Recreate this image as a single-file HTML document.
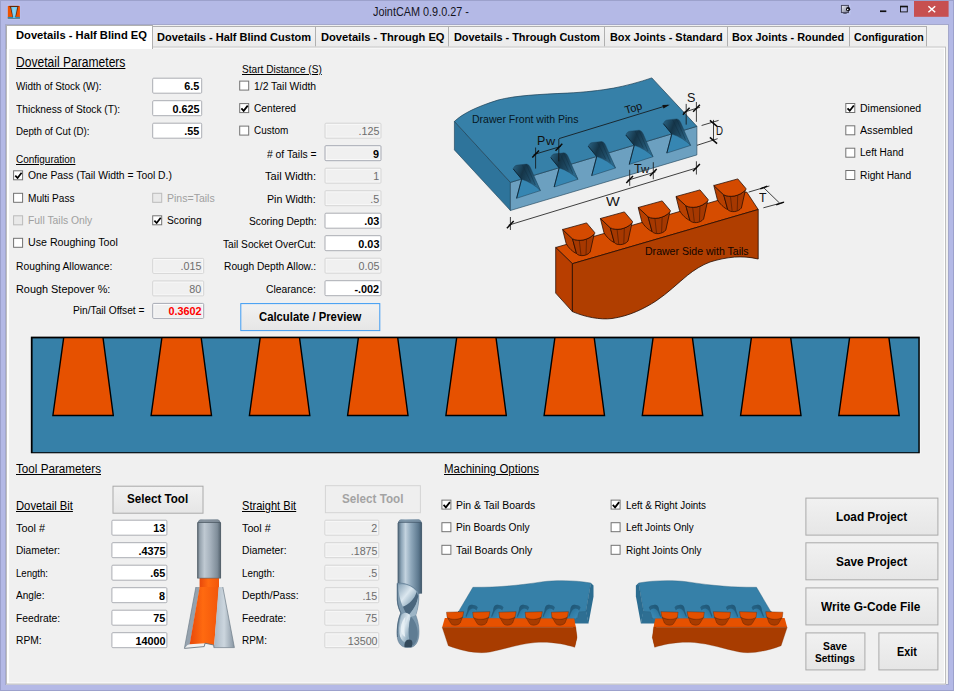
<!DOCTYPE html>
<html><head><meta charset="utf-8"><title>JointCAM 0.9.0.27 -</title>
<style>
html,body{margin:0;padding:0;}
body{width:954px;height:691px;overflow:hidden;background:#b4b9e6;font-family:"Liberation Sans",sans-serif;position:relative;}
#win{position:absolute;left:0;top:0;width:954px;height:691px;background:#b4b9e6;box-shadow:inset 0 0 0 1px #9ca1cc;}
#client{position:absolute;left:6px;top:25px;width:942px;height:659px;background:#f0f0f0;box-shadow:0 0 0 1px #a4a8cb;}
#pane{position:absolute;left:0;top:0;transform:translate(6px,46.5px);width:940.4px;height:637.7px;background:#fff;border:1px solid #bebebe;box-sizing:border-box;}
#page{position:absolute;left:0;top:0;transform:translate(8.9px,48.5px);width:935.2px;height:633.7px;background:#f0f0f0;}
.tab{position:absolute;top:26px;height:21px;box-sizing:border-box;border:1px solid #b0b0b0;border-bottom:none;background:linear-gradient(#f3f3f3,#ebebeb);}
.tab.act{top:25px;height:24px;background:#fff;border-color:#b0b0b0;z-index:2;}
.t{position:absolute;z-index:5;white-space:nowrap;transform-origin:0 50%;color:#000;display:block;}
.tb{position:absolute;left:0;top:0;height:16.2px;box-sizing:border-box;border:1px solid #abadb3;border-radius:1.5px;background:#fff;}
.tb.dis{border-color:#d6d6d6;background:#f0f0f0;box-shadow:inset 0 0 0 1px #f9f9f9;}
.tb.ro{border-color:#a7aab4;background:#f0f0f0;box-shadow:inset 0 0 0 1px #fcfcfc;}
.tb.red{border-color:#a7aab4;background:#f0f0f0;box-shadow:inset 0 0 0 1px #fcfcfc;}
.btn{position:absolute;left:0;top:0;box-sizing:border-box;border:1px solid #a9a9a9;background:linear-gradient(#f1f1f1,#e6e6e6);}
.btn.def{border-color:#3c9bf3;}
.btn.d{border-color:#d4d4d4;background:#efefef;}
.cb{position:absolute;left:0;top:0;width:10.4px;height:10.4px;box-sizing:border-box;border:1px solid #707070;background:#fff;}
.cb.cd{border-color:#bcbcbc;background:#e9e9e9;}
.cb svg{position:absolute;left:-1px;top:-1px;width:10.4px;height:10.4px;}
#gfx{position:absolute;left:0;top:0;width:954px;height:691px;pointer-events:none;}
</style></head>
<body>
<div id="win">
<div id="client"></div>
<div class="tab act" style="left:6px;width:147px"></div>
<div class="tab" style="left:152px;width:163.5px"></div>
<div class="tab" style="left:314.5px;width:134.0px"></div>
<div class="tab" style="left:447.5px;width:157.0px"></div>
<div class="tab" style="left:603.5px;width:124.0px"></div>
<div class="tab" style="left:726.5px;width:123.0px"></div>
<div class="tab" style="left:848.5px;width:78.5px"></div>
<div id="pane"></div>
<div id="page"></div>
<div class="tab act" style="left:0;top:0;transform:translate(7px,45.5px);width:145px;border:none;height:3px;background:#fff;z-index:3"></div>
<div class="tb en" style="transform:translate(152.2px,77.7px);width:49.6px"></div>
<div class="tb en" style="transform:translate(152.2px,100.2px);width:49.6px"></div>
<div class="tb en" style="transform:translate(152.2px,122.7px);width:49.6px"></div>
<div class="tb dis" style="transform:translate(152.2px,257.9px);width:51.6px"></div>
<div class="tb dis" style="transform:translate(152.2px,280.4px);width:51.6px"></div>
<div class="tb red" style="transform:translate(152.2px,302.9px);width:51.6px"></div>
<div class="tb dis" style="transform:translate(324.5px,122.7px);width:57.1px"></div>
<div class="tb ro" style="transform:translate(324.5px,145.2px);width:57.1px"></div>
<div class="tb dis" style="transform:translate(324.5px,167.7px);width:57.1px"></div>
<div class="tb dis" style="transform:translate(324.5px,190.2px);width:57.1px"></div>
<div class="tb en" style="transform:translate(324.5px,212.7px);width:57.1px"></div>
<div class="tb en" style="transform:translate(324.5px,235.2px);width:57.1px"></div>
<div class="tb dis" style="transform:translate(324.5px,257.7px);width:57.1px"></div>
<div class="tb en" style="transform:translate(324.5px,280.2px);width:57.1px"></div>
<div class="tb en" style="transform:translate(111.4px,519.7px);width:56.4px"></div>
<div class="tb en" style="transform:translate(111.4px,542.2px);width:56.4px"></div>
<div class="tb en" style="transform:translate(111.4px,564.7px);width:56.4px"></div>
<div class="tb en" style="transform:translate(111.4px,587.2px);width:56.4px"></div>
<div class="tb en" style="transform:translate(111.4px,609.7px);width:56.4px"></div>
<div class="tb en" style="transform:translate(111.4px,632.2px);width:56.4px"></div>
<div class="tb dis" style="transform:translate(324.3px,519.7px);width:55.4px"></div>
<div class="tb dis" style="transform:translate(324.3px,542.2px);width:55.4px"></div>
<div class="tb dis" style="transform:translate(324.3px,564.7px);width:55.4px"></div>
<div class="tb dis" style="transform:translate(324.3px,587.2px);width:55.4px"></div>
<div class="tb dis" style="transform:translate(324.3px,609.7px);width:55.4px"></div>
<div class="tb dis" style="transform:translate(324.3px,632.2px);width:55.4px"></div>
<div class="btn def" style="transform:translate(240.3px,303.1px);width:140.3px;height:27.7px"></div>
<div class="btn n" style="transform:translate(112.5px,485.7px);width:90.5px;height:27.7px"></div>
<div class="btn d" style="transform:translate(324.9px,485.2px);width:95.6px;height:28.0px"></div>
<div class="btn n" style="transform:translate(805.4px,497.6px);width:132.6px;height:38.0px"></div>
<div class="btn n" style="transform:translate(805.4px,542.3px);width:132.6px;height:38.4px"></div>
<div class="btn n" style="transform:translate(805.4px,587.4px);width:132.6px;height:38.4px"></div>
<div class="btn n" style="transform:translate(805.4px,632.4px);width:59.7px;height:38.2px"></div>
<div class="btn n" style="transform:translate(878.4px,632.4px);width:59.6px;height:38.2px"></div>
<div class="cb" style="transform:translate(13.1px,170.3px)"><svg viewBox="0 0 10 10"><path d="M2.1 5.1 L4.3 7.4 L8.2 2.4" fill="none" stroke="#000" stroke-width="1.7"/></svg></div>
<div class="cb" style="transform:translate(13.1px,192.8px)"></div>
<div class="cb cd" style="transform:translate(13.1px,215.3px)"></div>
<div class="cb" style="transform:translate(13.1px,237.8px)"></div>
<div class="cb cd" style="transform:translate(152.2px,192.8px)"></div>
<div class="cb" style="transform:translate(152.2px,215.3px)"><svg viewBox="0 0 10 10"><path d="M2.1 5.1 L4.3 7.4 L8.2 2.4" fill="none" stroke="#000" stroke-width="1.7"/></svg></div>
<div class="cb" style="transform:translate(239.2px,80.6px)"></div>
<div class="cb" style="transform:translate(239.2px,103.1px)"><svg viewBox="0 0 10 10"><path d="M2.1 5.1 L4.3 7.4 L8.2 2.4" fill="none" stroke="#000" stroke-width="1.7"/></svg></div>
<div class="cb" style="transform:translate(239.2px,125.6px)"></div>
<div class="cb" style="transform:translate(845.3px,103.0px)"><svg viewBox="0 0 10 10"><path d="M2.1 5.1 L4.3 7.4 L8.2 2.4" fill="none" stroke="#000" stroke-width="1.7"/></svg></div>
<div class="cb" style="transform:translate(845.3px,125.3px)"></div>
<div class="cb" style="transform:translate(845.3px,147.7px)"></div>
<div class="cb" style="transform:translate(845.3px,170.0px)"></div>
<div class="cb" style="transform:translate(441.4px,499.6px)"><svg viewBox="0 0 10 10"><path d="M2.1 5.1 L4.3 7.4 L8.2 2.4" fill="none" stroke="#000" stroke-width="1.7"/></svg></div>
<div class="cb" style="transform:translate(441.4px,522.2px)"></div>
<div class="cb" style="transform:translate(441.4px,544.8px)"></div>
<div class="cb" style="transform:translate(610.6px,499.6px)"><svg viewBox="0 0 10 10"><path d="M2.1 5.1 L4.3 7.4 L8.2 2.4" fill="none" stroke="#000" stroke-width="1.7"/></svg></div>
<div class="cb" style="transform:translate(610.6px,522.2px)"></div>
<div class="cb" style="transform:translate(610.6px,544.8px)"></div>
<svg id="gfx" viewBox="0 0 954 691">
<defs>
<linearGradient id="shank" x1="0" x2="1" y1="0" y2="0"><stop offset="0" stop-color="#56646f"/><stop offset="0.1" stop-color="#94a1ac"/><stop offset="0.3" stop-color="#bfc9d2"/><stop offset="0.55" stop-color="#a6b2bd"/><stop offset="0.85" stop-color="#7f8d99"/><stop offset="1" stop-color="#515f6a"/></linearGradient>
<linearGradient id="shank2" x1="0" x2="1" y1="0" y2="0"><stop offset="0" stop-color="#4d6476"/><stop offset="0.15" stop-color="#8ea6b8"/><stop offset="0.32" stop-color="#c3d3df"/><stop offset="0.55" stop-color="#8fa8bb"/><stop offset="0.85" stop-color="#5e7a90"/><stop offset="1" stop-color="#40576a"/></linearGradient>
<linearGradient id="blade" x1="0" x2="1" y1="0" y2="0"><stop offset="0" stop-color="#a9b6c2"/><stop offset="0.5" stop-color="#ccd6de"/><stop offset="1" stop-color="#8795a2"/></linearGradient>
<linearGradient id="orng" x1="0" x2="1" y1="0" y2="0"><stop offset="0" stop-color="#e8480a"/><stop offset="0.45" stop-color="#ff6a10"/><stop offset="1" stop-color="#f2560a"/></linearGradient>
<linearGradient id="wall" x1="0" x2="1" y1="0" y2="0.4"><stop offset="0" stop-color="#2a6485"/><stop offset="0.4" stop-color="#153548"/><stop offset="0.7" stop-color="#1e4a64"/><stop offset="1" stop-color="#2c688a"/></linearGradient>
<linearGradient id="flute" x1="0" x2="1" y1="0" y2="1"><stop offset="0" stop-color="#8aa5b9"/><stop offset="0.45" stop-color="#dbe7ef"/><stop offset="0.8" stop-color="#8eaabd"/><stop offset="1" stop-color="#a9bfce"/></linearGradient>
</defs>
<rect x="30" y="335.8" width="890.6" height="118.2" fill="#f8f8f8"/>
<rect x="30.8" y="336.6" width="889" height="116.7" fill="#000"/>
<rect x="32.6" y="338.4" width="885.7" height="113.8" fill="#3680a8"/>
<polygon points="63.7,337.6 103.0,337.6 113.3,415.5 52.9,415.5" fill="#e65100" stroke="#000" stroke-width="1.4" stroke-linejoin="miter"/>
<polygon points="161.9,337.6 201.2,337.6 211.5,415.5 151.1,415.5" fill="#e65100" stroke="#000" stroke-width="1.4" stroke-linejoin="miter"/>
<polygon points="260.2,337.6 299.5,337.6 309.8,415.5 249.4,415.5" fill="#e65100" stroke="#000" stroke-width="1.4" stroke-linejoin="miter"/>
<polygon points="358.4,337.6 397.7,337.6 408.0,415.5 347.6,415.5" fill="#e65100" stroke="#000" stroke-width="1.4" stroke-linejoin="miter"/>
<polygon points="456.7,337.6 496.0,337.6 506.3,415.5 445.9,415.5" fill="#e65100" stroke="#000" stroke-width="1.4" stroke-linejoin="miter"/>
<polygon points="554.9,337.6 594.2,337.6 604.5,415.5 544.1,415.5" fill="#e65100" stroke="#000" stroke-width="1.4" stroke-linejoin="miter"/>
<polygon points="653.1,337.6 692.4,337.6 702.7,415.5 642.3,415.5" fill="#e65100" stroke="#000" stroke-width="1.4" stroke-linejoin="miter"/>
<polygon points="751.4,337.6 790.7,337.6 801.0,415.5 740.6,415.5" fill="#e65100" stroke="#000" stroke-width="1.4" stroke-linejoin="miter"/>
<polygon points="849.6,337.6 888.9,337.6 899.2,415.5 838.8,415.5" fill="#e65100" stroke="#000" stroke-width="1.4" stroke-linejoin="miter"/>
<g stroke-linejoin="round">
<polygon points="454.4,121.4 510.4,182.4 510.4,210.5 454.4,149.9" fill="#2e749b" stroke="#1c3f55" stroke-width="0.6"/>
<polygon points="510.4,182.4 696.9,126.3 696.9,154.9 510.4,210.5" fill="#6ca0c0" stroke="#1c3f55" stroke-width="0.6"/>
<path d="M454.4,121.4 C463,113.5 476,107 497.9,100.1 C515,95.5 540,94.3 567.3,93.1 C585,92.2 600,90.5 613.6,88.1 C625,86 640,82 651.8,77.9 L696.9,126.3 L510.4,182.4 Z" fill="#3680a8" stroke="#1c3f55" stroke-width="0.7"/>
<g transform="translate(0.00,-0.00)">
<polygon points="521.6,179.2 516.6,198.3 540.4,190.6 530,170" fill="#3686b2" stroke="#1c3f55" stroke-width="0.5"/>
<path d="M513.2,168.9 C514,166.4 515.5,165.4 517.4,165.1 L526.4,164.1 C528.6,164.3 529.6,165.8 530.6,168 L540.4,190.6 C536,186 529,181.5 521.6,179.2 Z" fill="url(#wall)" stroke="#1c3f55" stroke-width="0.4"/>
<path d="M522.5,165 L530.5,181.5 M526.4,164.4 L535.3,185" stroke="#0f2e41" stroke-width="0.7" fill="none" opacity="0.65"/>
<path d="M513.2,168.9 L521.6,179.2 L516.6,198.3" stroke="#0c2433" stroke-width="0.9" fill="none"/>
</g>
<g transform="translate(37.55,-11.30)">
<polygon points="521.6,179.2 516.6,198.3 540.4,190.6 530,170" fill="#3686b2" stroke="#1c3f55" stroke-width="0.5"/>
<path d="M513.2,168.9 C514,166.4 515.5,165.4 517.4,165.1 L526.4,164.1 C528.6,164.3 529.6,165.8 530.6,168 L540.4,190.6 C536,186 529,181.5 521.6,179.2 Z" fill="url(#wall)" stroke="#1c3f55" stroke-width="0.4"/>
<path d="M522.5,165 L530.5,181.5 M526.4,164.4 L535.3,185" stroke="#0f2e41" stroke-width="0.7" fill="none" opacity="0.65"/>
<path d="M513.2,168.9 L521.6,179.2 L516.6,198.3" stroke="#0c2433" stroke-width="0.9" fill="none"/>
</g>
<g transform="translate(75.10,-22.60)">
<polygon points="521.6,179.2 516.6,198.3 540.4,190.6 530,170" fill="#3686b2" stroke="#1c3f55" stroke-width="0.5"/>
<path d="M513.2,168.9 C514,166.4 515.5,165.4 517.4,165.1 L526.4,164.1 C528.6,164.3 529.6,165.8 530.6,168 L540.4,190.6 C536,186 529,181.5 521.6,179.2 Z" fill="url(#wall)" stroke="#1c3f55" stroke-width="0.4"/>
<path d="M522.5,165 L530.5,181.5 M526.4,164.4 L535.3,185" stroke="#0f2e41" stroke-width="0.7" fill="none" opacity="0.65"/>
<path d="M513.2,168.9 L521.6,179.2 L516.6,198.3" stroke="#0c2433" stroke-width="0.9" fill="none"/>
</g>
<g transform="translate(112.65,-33.90)">
<polygon points="521.6,179.2 516.6,198.3 540.4,190.6 530,170" fill="#3686b2" stroke="#1c3f55" stroke-width="0.5"/>
<path d="M513.2,168.9 C514,166.4 515.5,165.4 517.4,165.1 L526.4,164.1 C528.6,164.3 529.6,165.8 530.6,168 L540.4,190.6 C536,186 529,181.5 521.6,179.2 Z" fill="url(#wall)" stroke="#1c3f55" stroke-width="0.4"/>
<path d="M522.5,165 L530.5,181.5 M526.4,164.4 L535.3,185" stroke="#0f2e41" stroke-width="0.7" fill="none" opacity="0.65"/>
<path d="M513.2,168.9 L521.6,179.2 L516.6,198.3" stroke="#0c2433" stroke-width="0.9" fill="none"/>
</g>
<g transform="translate(150.20,-45.20)">
<polygon points="521.6,179.2 516.6,198.3 540.4,190.6 530,170" fill="#3686b2" stroke="#1c3f55" stroke-width="0.5"/>
<path d="M513.2,168.9 C514,166.4 515.5,165.4 517.4,165.1 L526.4,164.1 C528.6,164.3 529.6,165.8 530.6,168 L540.4,190.6 C536,186 529,181.5 521.6,179.2 Z" fill="url(#wall)" stroke="#1c3f55" stroke-width="0.4"/>
<path d="M522.5,165 L530.5,181.5 M526.4,164.4 L535.3,185" stroke="#0f2e41" stroke-width="0.7" fill="none" opacity="0.65"/>
<path d="M513.2,168.9 L521.6,179.2 L516.6,198.3" stroke="#0c2433" stroke-width="0.9" fill="none"/>
</g>
</g>
</g>
<g stroke-linejoin="round">
<polygon points="555.7,247.5 572.4,263.7 758.2,209.5 746.7,192" fill="#d64c00" stroke="#240b00" stroke-width="0.75"/>
<polygon points="555.7,247.5 572.4,263.7 572.4,311.6 555.7,293.1" fill="#b83e00" stroke="#240b00" stroke-width="0.75"/>
<path d="M572.4,263.7 L758.2,209.5 L758.2,259 C750,257 742,256.6 734.3,257.1 C726,257.8 718,259.5 710,262 C702,265 694,270 687.5,275.3 C678,283 668,293 655.7,301.2 C645,308 630,316 612,318.5 C600,320 585,317 572.4,311.6 Z" fill="#b03e00" stroke="#240b00" stroke-width="0.8"/>
<g transform="translate(0.00,-0.00)">
<path d="M562.6,229.5 L572.5,238.8 L576.5,253.5 C573.5,252.5 568,247.5 566.1,243.4 Z" fill="#b84000" stroke="#240b00" stroke-width="0.75"/>
<path d="M572.5,238.8 C578,241.7 588,240.7 594.2,234 L590.2,252 C587,256.3 579,256.8 576.5,253.5 Z" fill="#a63800" stroke="#240b00" stroke-width="0.75"/>
<path d="M579.3,240.6 L581,255.7 M586.5,239.8 L586,255 " stroke="#5e2000" stroke-width="0.8" fill="none"/>
<path d="M562.6,229.5 L586.6,222.9 L594.7,232.5 C594.9,233.4 594.6,233.8 594.2,234 C588,240.7 578,241.7 572.5,238.8 Z" fill="#d44a00" stroke="#240b00" stroke-width="0.75"/>
</g>
<g transform="translate(37.80,-11.00)">
<path d="M562.6,229.5 L572.5,238.8 L576.5,253.5 C573.5,252.5 568,247.5 566.1,243.4 Z" fill="#b84000" stroke="#240b00" stroke-width="0.75"/>
<path d="M572.5,238.8 C578,241.7 588,240.7 594.2,234 L590.2,252 C587,256.3 579,256.8 576.5,253.5 Z" fill="#a63800" stroke="#240b00" stroke-width="0.75"/>
<path d="M579.3,240.6 L581,255.7 M586.5,239.8 L586,255 " stroke="#5e2000" stroke-width="0.8" fill="none"/>
<path d="M562.6,229.5 L586.6,222.9 L594.7,232.5 C594.9,233.4 594.6,233.8 594.2,234 C588,240.7 578,241.7 572.5,238.8 Z" fill="#d44a00" stroke="#240b00" stroke-width="0.75"/>
</g>
<g transform="translate(75.60,-22.00)">
<path d="M562.6,229.5 L572.5,238.8 L576.5,253.5 C573.5,252.5 568,247.5 566.1,243.4 Z" fill="#b84000" stroke="#240b00" stroke-width="0.75"/>
<path d="M572.5,238.8 C578,241.7 588,240.7 594.2,234 L590.2,252 C587,256.3 579,256.8 576.5,253.5 Z" fill="#a63800" stroke="#240b00" stroke-width="0.75"/>
<path d="M579.3,240.6 L581,255.7 M586.5,239.8 L586,255 " stroke="#5e2000" stroke-width="0.8" fill="none"/>
<path d="M562.6,229.5 L586.6,222.9 L594.7,232.5 C594.9,233.4 594.6,233.8 594.2,234 C588,240.7 578,241.7 572.5,238.8 Z" fill="#d44a00" stroke="#240b00" stroke-width="0.75"/>
</g>
<g transform="translate(113.40,-33.00)">
<path d="M562.6,229.5 L572.5,238.8 L576.5,253.5 C573.5,252.5 568,247.5 566.1,243.4 Z" fill="#b84000" stroke="#240b00" stroke-width="0.75"/>
<path d="M572.5,238.8 C578,241.7 588,240.7 594.2,234 L590.2,252 C587,256.3 579,256.8 576.5,253.5 Z" fill="#a63800" stroke="#240b00" stroke-width="0.75"/>
<path d="M579.3,240.6 L581,255.7 M586.5,239.8 L586,255 " stroke="#5e2000" stroke-width="0.8" fill="none"/>
<path d="M562.6,229.5 L586.6,222.9 L594.7,232.5 C594.9,233.4 594.6,233.8 594.2,234 C588,240.7 578,241.7 572.5,238.8 Z" fill="#d44a00" stroke="#240b00" stroke-width="0.75"/>
</g>
<g transform="translate(151.20,-44.00)">
<path d="M562.6,229.5 L572.5,238.8 L576.5,253.5 C573.5,252.5 568,247.5 566.1,243.4 Z" fill="#b84000" stroke="#240b00" stroke-width="0.75"/>
<path d="M572.5,238.8 C578,241.7 588,240.7 594.2,234 L590.2,252 C587,256.3 579,256.8 576.5,253.5 Z" fill="#a63800" stroke="#240b00" stroke-width="0.75"/>
<path d="M579.3,240.6 L581,255.7 M586.5,239.8 L586,255 " stroke="#5e2000" stroke-width="0.8" fill="none"/>
<path d="M562.6,229.5 L586.6,222.9 L594.7,232.5 C594.9,233.4 594.6,233.8 594.2,234 C588,240.7 578,241.7 572.5,238.8 Z" fill="#d44a00" stroke="#240b00" stroke-width="0.75"/>
</g>
</g>
<g stroke="#111" stroke-width="0.8" fill="none">
<path d="M508.5,225.2 L697,167.8 M510.4,217 L510.4,230 M696.4,161.3 L696.4,174.5"/>
<path d="M627.5,180.3 L655.5,171.9 M629.7,169.8 L629.7,185.8 M653.3,162.2 L653.3,179.2"/>
<path d="M533.6,154.6 L561,146.4 M535.6,147.5 L535.6,168.6 M558.8,139 L558.8,161.4"/>
<path d="M559,138.6 L668,105.2"/>
<path d="M683,112.5 L700,107.2 M686.2,103.9 L686.2,124.6 M696.4,102 L696.4,121.8"/>
<path d="M713.5,119.9 L713.5,140.6 M701.6,125.5 L718.6,120.4 M697,145.3 L717.6,138.7"/>
<path d="M763.4,187.4 L779.9,203.4 M748.6,192.1 L769.4,186 M763.4,207.8 L784.2,202.2"/>
</g>
<g stroke="#0a0a0a" stroke-width="1.5" fill="none" stroke-linecap="butt">
<path d="M506.9,228.3 L513.7,221.1 M693.0,171.3 L699.9,164.1 M626.3,183.1 L633.0,176.1 M649.9,176.1 L656.7,169.1 M532.3,157.5 L539.0,150.5 M555.5,150.7 L562.3,143.7 M682.9,114.7 L689.6,107.7 M693.1,111.7 L699.9,104.7 M709.9,120.4 L717.1,126.4 M709.9,137.4 L717.1,143.6 M760.3,188.9 L767.3,186.1 M776.2,204.9 L783.8,202.1"/>
</g>
<polygon points="669.8,104.7 662.3,104.9 663.5,108.5" fill="#111" stroke="none"/>
<g>
<path d="M197.3,523 L198.8,520.6 Q199.3,519.4 200.8,519.4 L217.4,519.4 Q218.9,519.4 219.4,520.6 L220.9,523 L220.9,578.2 L197.3,578.2 Z" fill="url(#shank)"/>
<path d="M198.6,520.9 Q199.2,519.4 200.8,519.4 L217.4,519.4 Q219,519.4 219.6,520.9 L220.5,522.2 L197.7,522.2 Z" fill="#7f8c97" opacity="0.9"/>
<path d="M197.5,522.5 L220.7,522.5" stroke="#4c5963" stroke-width="0.8"/>
<path d="M197.6,523 L197.6,578 M220.6,523 L220.6,578" stroke="#4a5762" stroke-width="0.7" opacity="0.8"/>
<rect x="199.6" y="578" width="19.4" height="9.6" fill="url(#orng)"/>
<polygon points="195.9,587 199.8,587 189.9,644.2 187.5,645 184.4,648.4" fill="#95a2ae"/>
<polygon points="199.6,587 219,587 214.2,645 205,643.2 189.7,644.2" fill="url(#orng)"/>
<polygon points="218.6,587 222.8,587 234.4,647.6 213.9,647.6 214.6,640" fill="url(#blade)"/>
<path d="M184.4,648.4 L204.2,646.6 L205,643.2 L213.7,645 L213.9,647.6" fill="none" stroke="#5b6873" stroke-width="0.8"/>
<path d="M195.9,587 L184.4,648.4 M222.8,587 L234.4,647.6 L213.9,647.6" fill="none" stroke="#6f7c88" stroke-width="0.7"/>
<path d="M197.3,578.2 L220.9,578.2" stroke="#5a6872" stroke-width="0.6"/>
</g>
<g>
<path d="M397.8,523 L399.2,520.6 Q399.7,519.4 401.2,519.4 L418.5,519.4 Q420,519.4 420.5,520.6 L421.9,523 L421.9,593.6 L417.8,594 C413,588 405,583 397.8,583.4 Z" fill="url(#shank2)"/>
<path d="M399,520.9 Q399.6,519.4 401.2,519.4 L418.5,519.4 Q420.1,519.4 420.7,520.9 L421.5,522.1 L398.2,522.1 Z" fill="#7890a3" opacity="0.9"/>
<path d="M398,522.4 L421.7,522.4" stroke="#465c6e" stroke-width="0.8"/>
<path d="M398.1,523 L398.1,583 M421.6,523 L421.6,593.4" stroke="#44596b" stroke-width="0.7" opacity="0.8"/>
<path d="M397.2,583.2 L397.2,600 C397.5,606 399.3,610 400.8,613 C398,619 396.6,628 397.3,637 C398,644 402,647.4 407,647.4 L411.5,647.2 C416.5,646 419.2,640 419,631 C418.8,624 417.2,619 415.8,615 C417.6,610 419.2,602 418.8,594.2 L417.8,591.5 C413,586 405,582.4 397.2,583.2 Z" fill="#7d99ae" stroke="#56728a" stroke-width="0.5"/>
<path d="M398.4,584.8 C404,583 413,586 416.6,592 C414.5,599.5 409,604.5 403,606.8 C400,601 398.2,592.5 398.4,584.8 Z" fill="url(#flute)"/>
<path d="M403,606.8 C409,604.5 414.5,599.5 416.6,592 L418.2,596 C417.4,604 412.5,611.5 407.6,616 C405.5,612.5 404,609.5 403,606.8 Z" fill="#4a667d"/>
<path d="M407.6,616 C412.5,611.5 417.4,604 418.2,596 C418.6,603 417.4,610 415.8,615 C413,617 410,617 407.6,616 Z" fill="#9db5c6"/>
<path d="M401.2,615.5 C403.5,611.5 408.5,612 410.8,616.5 C408.6,624 408,634 409.8,642 C405,644.5 400.2,640.5 399.4,633 C398.8,626 399.8,620 401.2,615.5 Z" fill="url(#flute)"/>
<path d="M410.8,616.5 C414.5,620 417.6,626 417.8,633 C418,639 416,643.5 412.8,645.5 C411,642 409.8,642 409.8,642 C408,634 408.6,624 410.8,616.5 Z" fill="#5f7c93"/>
<path d="M404.6,647.3 C403.4,641.8 407.6,637.6 411.8,640.4 C413,643 412.4,646 411.2,647.3 Z" fill="#33495b"/>
<path d="M400.8,629 C401.2,622 404,618 405.5,617 C404.2,623 404,630 405.2,637 C402.5,635.5 400.6,632.5 400.8,629 Z" fill="#eaf2f7" opacity="0.85"/>
<path d="M397.4,583.5 L397.4,600 C397.7,606 399.5,610 401,613 C398.2,619 396.8,628 397.5,637" fill="none" stroke="#4d687e" stroke-width="0.9"/>
</g><defs><linearGradient id="slotg" x1="0" y1="0" x2="1" y2="1"><stop offset="0" stop-color="#235e80"/><stop offset="0.45" stop-color="#2f7aa3"/><stop offset="1" stop-color="#4091be"/></linearGradient></defs>
<g id="sj">
<polygon points="458,611 586.3,611 588.5,623.4 458,623.4" fill="#2e6f93"/>
<polygon points="590.9,583.1 593.5,585.5 593.5,596.5 588.5,623.4 585.9,611" fill="#2b6c90"/>
<path d="M472.9,587.3 C496,587.4 514.9,586 543.2,581.7 C555,580.2 575,580 590.9,583.1 L585.9,611.5 L578,612 L578,618 L454.8,618 Z" fill="#3680a8" stroke="#2a617f" stroke-width="0.4"/>
<g transform="translate(0.0,0)">
<path d="M467.4,610.7 C468,604.4 471,604.6 473,604.9 C475.5,605.2 477.5,606 477.8,607.6 L473.2,618.4 L464.9,618.4 Z" fill="url(#slotg)"/>
<path d="M467.4,610.7 C468,604.4 471,604.6 473,604.9 C475.5,605.2 477.5,606 477.8,607.6 L476.4,610.6 C474.6,607.6 470.8,607.8 469,611 L466.2,617.2 L465.6,616 Z" fill="#1c4d69" opacity="0.6"/>
</g>
<g transform="translate(25.7,0)">
<path d="M467.4,610.7 C468,604.4 471,604.6 473,604.9 C475.5,605.2 477.5,606 477.8,607.6 L473.2,618.4 L464.9,618.4 Z" fill="url(#slotg)"/>
<path d="M467.4,610.7 C468,604.4 471,604.6 473,604.9 C475.5,605.2 477.5,606 477.8,607.6 L476.4,610.6 C474.6,607.6 470.8,607.8 469,611 L466.2,617.2 L465.6,616 Z" fill="#1c4d69" opacity="0.6"/>
</g>
<g transform="translate(51.4,0)">
<path d="M467.4,610.7 C468,604.4 471,604.6 473,604.9 C475.5,605.2 477.5,606 477.8,607.6 L473.2,618.4 L464.9,618.4 Z" fill="url(#slotg)"/>
<path d="M467.4,610.7 C468,604.4 471,604.6 473,604.9 C475.5,605.2 477.5,606 477.8,607.6 L476.4,610.6 C474.6,607.6 470.8,607.8 469,611 L466.2,617.2 L465.6,616 Z" fill="#1c4d69" opacity="0.6"/>
</g>
<g transform="translate(77.1,0)">
<path d="M467.4,610.7 C468,604.4 471,604.6 473,604.9 C475.5,605.2 477.5,606 477.8,607.6 L473.2,618.4 L464.9,618.4 Z" fill="url(#slotg)"/>
<path d="M467.4,610.7 C468,604.4 471,604.6 473,604.9 C475.5,605.2 477.5,606 477.8,607.6 L476.4,610.6 C474.6,607.6 470.8,607.8 469,611 L466.2,617.2 L465.6,616 Z" fill="#1c4d69" opacity="0.6"/>
</g>
<g transform="translate(102.8,0)">
<path d="M467.4,610.7 C468,604.4 471,604.6 473,604.9 C475.5,605.2 477.5,606 477.8,607.6 L473.2,618.4 L464.9,618.4 Z" fill="url(#slotg)"/>
<path d="M467.4,610.7 C468,604.4 471,604.6 473,604.9 C475.5,605.2 477.5,606 477.8,607.6 L476.4,610.6 C474.6,607.6 470.8,607.8 469,611 L466.2,617.2 L465.6,616 Z" fill="#1c4d69" opacity="0.6"/>
</g>
<polygon points="574.1,618.8 577,637.5 574.7,647.3 573,630" fill="#c94a00"/>
<polygon points="444.8,618 442.2,627.3 575.8,627.2 574.1,618.6" fill="#e65100"/>
<path d="M442.2,627.3 L575.8,627.2 L577,637.5 L574.7,647.3 C565,644 550,641.3 535,642.5 C520,643.7 505,649 490,652 C478,654.2 462,651 448.3,645.7 Z" fill="#a83c00" stroke="#7a2b00" stroke-width="0.3"/>
<g transform="translate(0.0,0)">
<path d="M447.3,617.3 C450,620 460,620 462.6,616.8 L460.2,623 C458,625.8 452.5,625.8 451,623.6 Z" fill="#a83c00" stroke="#5a1f00" stroke-width="0.45"/>
<path d="M446.5,612.2 L463.7,611.7 L462.8,616.6 C460,620 450,620 447.1,617.2 Z" fill="#e35000" stroke="#6a2600" stroke-width="0.4"/>
</g>
<g transform="translate(26.2,0)">
<path d="M447.3,617.3 C450,620 460,620 462.6,616.8 L460.2,623 C458,625.8 452.5,625.8 451,623.6 Z" fill="#a83c00" stroke="#5a1f00" stroke-width="0.45"/>
<path d="M446.5,612.2 L463.7,611.7 L462.8,616.6 C460,620 450,620 447.1,617.2 Z" fill="#e35000" stroke="#6a2600" stroke-width="0.4"/>
</g>
<g transform="translate(52.4,0)">
<path d="M447.3,617.3 C450,620 460,620 462.6,616.8 L460.2,623 C458,625.8 452.5,625.8 451,623.6 Z" fill="#a83c00" stroke="#5a1f00" stroke-width="0.45"/>
<path d="M446.5,612.2 L463.7,611.7 L462.8,616.6 C460,620 450,620 447.1,617.2 Z" fill="#e35000" stroke="#6a2600" stroke-width="0.4"/>
</g>
<g transform="translate(78.6,0)">
<path d="M447.3,617.3 C450,620 460,620 462.6,616.8 L460.2,623 C458,625.8 452.5,625.8 451,623.6 Z" fill="#a83c00" stroke="#5a1f00" stroke-width="0.45"/>
<path d="M446.5,612.2 L463.7,611.7 L462.8,616.6 C460,620 450,620 447.1,617.2 Z" fill="#e35000" stroke="#6a2600" stroke-width="0.4"/>
</g>
<g transform="translate(104.8,0)">
<path d="M447.3,617.3 C450,620 460,620 462.6,616.8 L460.2,623 C458,625.8 452.5,625.8 451,623.6 Z" fill="#a83c00" stroke="#5a1f00" stroke-width="0.45"/>
<path d="M446.5,612.2 L463.7,611.7 L462.8,616.6 C460,620 450,620 447.1,617.2 Z" fill="#e35000" stroke="#6a2600" stroke-width="0.4"/>
</g>
</g>
<use href="#sj" transform="translate(1229.4,0) scale(-1,1)"/>
<rect x="7.1" y="4.6" width="13.4" height="15" fill="#c3cbf4" opacity="0.55"/>
<rect x="7.8" y="5.9" width="12.1" height="12.8" fill="#ee5200"/>
<rect x="9.4" y="5.9" width="9.2" height="1.1" fill="#6a2806"/>
<polygon points="10.1,6.6 18.3,6.6 15.9,17 12.5,17" fill="#5a2408"/>
<polygon points="11.1,7 17.3,7 15.3,17 13,17" fill="#6fc8ef"/>
<polygon points="12.6,7.4 15.8,7.4 14.9,16.6 13.5,16.6" fill="#8ed6f4" opacity="0.7"/>
<rect x="7.8" y="16.9" width="12.1" height="1.8" fill="#2a8ab4"/>
<polygon points="13,17 15.3,17 15.3,18 13,18" fill="#5fc0ea"/>
<defs><linearGradient id="mon" x1="0" x2="1" y1="0" y2="1"><stop offset="0" stop-color="#f2f3f8"/><stop offset="1" stop-color="#777a92"/></linearGradient></defs>
<rect x="840.4" y="4.2" width="10.2" height="10.4" fill="#c6cdf5" opacity="0.5"/>
<rect x="841.4" y="5.4" width="7" height="7.2" fill="url(#mon)" stroke="#45465c" stroke-width="1"/>
<circle cx="848.1" cy="9.2" r="2.1" fill="#0c0c12"/><circle cx="847.7" cy="9.5" r="0.75" fill="#fff"/>
<rect x="843.3" y="12.9" width="3.4" height="1" fill="#50526a"/>
<rect x="880" y="10.4" width="6.3" height="1.7" fill="#111"/>
<rect x="900.5" y="6.6" width="6.8" height="5.3" fill="none" stroke="#111" stroke-width="0.9"/><rect x="900" y="5.7" width="7.8" height="1.6" fill="#111"/>
<rect x="914" y="1" width="34.6" height="15.8" fill="#c75050"/>
<path d="M928.4,6.3 L935.2,12.2 M935.2,6.3 L928.4,12.2" stroke="#fff" stroke-width="1.5" fill="none"/>
</svg>
<span class="t" style="left:373.4px;top:4.4px;font-size:13px;line-height:16px;transform:scaleX(0.8347);color:#15151f;">JointCAM 0.9.0.27 -</span>
<span class="t" style="left:16.0px;top:28.3px;font-size:11px;line-height:14px;transform:scaleX(1.0157);font-weight:bold;">Dovetails - Half Blind EQ</span>
<span class="t" style="left:156.8px;top:30.2px;font-size:11px;line-height:14px;transform:scaleX(1.0004);font-weight:bold;">Dovetails - Half Blind Custom</span>
<span class="t" style="left:320.8px;top:30.2px;font-size:11px;line-height:14px;transform:scaleX(1.0104);font-weight:bold;">Dovetails - Through EQ</span>
<span class="t" style="left:453.7px;top:30.2px;font-size:11px;line-height:14px;transform:scaleX(0.9913);font-weight:bold;">Dovetails - Through Custom</span>
<span class="t" style="left:609.8px;top:30.2px;font-size:11px;line-height:14px;transform:scaleX(0.9904);font-weight:bold;">Box Joints - Standard</span>
<span class="t" style="left:732.3px;top:30.2px;font-size:11px;line-height:14px;transform:scaleX(0.9871);font-weight:bold;">Box Joints - Rounded</span>
<span class="t" style="left:854.4px;top:30.2px;font-size:11px;line-height:14px;transform:scaleX(0.9680);font-weight:bold;">Configuration</span>
<span class="t" style="left:16.4px;top:52.7px;font-size:14px;line-height:18px;transform:scaleX(0.8626);text-decoration:underline;">Dovetail Parameters</span>
<span class="t" style="left:241.5px;top:61.5px;font-size:11.5px;line-height:14px;transform:scaleX(0.8793);text-decoration:underline;">Start Distance (S)</span>
<span class="t" style="left:15.6px;top:151.5px;font-size:11px;line-height:14px;transform:scaleX(0.9077);text-decoration:underline;">Configuration</span>
<span class="t" style="left:15.6px;top:462.0px;font-size:12px;line-height:15px;transform:scaleX(0.9728);text-decoration:underline;">Tool Parameters</span>
<span class="t" style="left:443.8px;top:462.0px;font-size:12px;line-height:15px;transform:scaleX(0.9548);text-decoration:underline;">Machining Options</span>
<span class="t" style="left:15.6px;top:498.6px;font-size:12px;line-height:15px;transform:scaleX(0.9373);text-decoration:underline;">Dovetail Bit</span>
<span class="t" style="left:241.8px;top:499.0px;font-size:12px;line-height:15px;transform:scaleX(0.9233);text-decoration:underline;">Straight Bit</span>
<span class="t" style="left:15.6px;top:78.1px;font-size:11.7px;line-height:15px;transform:scaleX(0.8493);">Width of Stock (W):</span>
<span class="t" style="left:15.8px;top:101.4px;font-size:11.7px;line-height:15px;transform:scaleX(0.8719);">Thickness of Stock (T):</span>
<span class="t" style="left:15.8px;top:123.3px;font-size:11.7px;line-height:15px;transform:scaleX(0.8320);">Depth of Cut (D):</span>
<span class="t" style="left:27.9px;top:167.1px;font-size:11.7px;line-height:15px;transform:scaleX(0.8855);">One Pass (Tail Width = Tool D.)</span>
<span class="t" style="left:27.7px;top:190.2px;font-size:11.7px;line-height:15px;transform:scaleX(0.8624);">Multi Pass</span>
<span class="t" style="left:27.7px;top:234.4px;font-size:11.7px;line-height:15px;transform:scaleX(0.9112);">Use Roughing Tool</span>
<span class="t" style="left:167.3px;top:212.4px;font-size:11.7px;line-height:15px;transform:scaleX(0.8754);">Scoring</span>
<span class="t" style="left:15.6px;top:258.4px;font-size:11.7px;line-height:15px;transform:scaleX(0.8830);">Roughing Allowance:</span>
<span class="t" style="left:15.6px;top:281.2px;font-size:11.7px;line-height:15px;transform:scaleX(0.9313);">Rough Stepover %:</span>
<span class="t" style="left:72.5px;top:302.4px;font-size:11.7px;line-height:15px;transform:scaleX(0.8723);">Pin/Tail Offset =</span>
<span class="t" style="left:254.1px;top:78.0px;font-size:11.7px;line-height:15px;transform:scaleX(0.8877);">1/2 Tail Width</span>
<span class="t" style="left:254.0px;top:100.3px;font-size:11.7px;line-height:15px;transform:scaleX(0.8733);">Centered</span>
<span class="t" style="left:254.0px;top:122.2px;font-size:11.7px;line-height:15px;transform:scaleX(0.8515);">Custom</span>
<span class="t" style="left:266.7px;top:146.1px;font-size:11.7px;line-height:15px;transform:scaleX(0.8842);"># of Tails =</span>
<span class="t" style="left:264.9px;top:168.4px;font-size:11.7px;line-height:15px;transform:scaleX(0.9479);">Tail Width:</span>
<span class="t" style="left:267.4px;top:191.4px;font-size:11.7px;line-height:15px;transform:scaleX(0.9124);">Pin Width:</span>
<span class="t" style="left:248.6px;top:213.1px;font-size:11.7px;line-height:15px;transform:scaleX(0.8744);">Scoring Depth:</span>
<span class="t" style="left:223.1px;top:236.2px;font-size:11.7px;line-height:15px;transform:scaleX(0.8720);">Tail Socket OverCut:</span>
<span class="t" style="left:223.9px;top:258.1px;font-size:11.7px;line-height:15px;transform:scaleX(0.8749);">Rough Depth Allow.:</span>
<span class="t" style="left:266.2px;top:281.0px;font-size:11.7px;line-height:15px;transform:scaleX(0.8809);">Clearance:</span>
<span class="t" style="left:860.2px;top:100.2px;font-size:11.7px;line-height:15px;transform:scaleX(0.8971);">Dimensioned</span>
<span class="t" style="left:860.2px;top:122.4px;font-size:11.7px;line-height:15px;transform:scaleX(0.9131);">Assembled</span>
<span class="t" style="left:860.2px;top:144.4px;font-size:11.7px;line-height:15px;transform:scaleX(0.8602);">Left Hand</span>
<span class="t" style="left:860.2px;top:167.2px;font-size:11.7px;line-height:15px;transform:scaleX(0.8754);">Right Hand</span>
<span class="t" style="left:15.8px;top:520.1px;font-size:11.7px;line-height:15px;transform:scaleX(0.9299);">Tool #</span>
<span class="t" style="left:15.8px;top:542.2px;font-size:11.7px;line-height:15px;transform:scaleX(0.8703);">Diameter:</span>
<span class="t" style="left:15.8px;top:565.1px;font-size:11.7px;line-height:15px;transform:scaleX(0.8205);">Length:</span>
<span class="t" style="left:15.8px;top:587.1px;font-size:11.7px;line-height:15px;transform:scaleX(0.8600);">Angle:</span>
<span class="t" style="left:15.8px;top:610.1px;font-size:11.7px;line-height:15px;transform:scaleX(0.8814);">Feedrate:</span>
<span class="t" style="left:15.8px;top:632.1px;font-size:11.7px;line-height:15px;transform:scaleX(0.8796);">RPM:</span>
<span class="t" style="left:241.8px;top:520.3px;font-size:11.7px;line-height:15px;transform:scaleX(0.9202);">Tool #</span>
<span class="t" style="left:241.8px;top:542.3px;font-size:11.7px;line-height:15px;transform:scaleX(0.8782);">Diameter:</span>
<span class="t" style="left:241.8px;top:565.3px;font-size:11.7px;line-height:15px;transform:scaleX(0.8385);">Length:</span>
<span class="t" style="left:241.8px;top:587.3px;font-size:11.7px;line-height:15px;transform:scaleX(0.8905);">Depth/Pass:</span>
<span class="t" style="left:241.8px;top:610.3px;font-size:11.7px;line-height:15px;transform:scaleX(0.8834);">Feedrate:</span>
<span class="t" style="left:241.8px;top:632.2px;font-size:11.7px;line-height:15px;transform:scaleX(0.8522);">RPM:</span>
<span class="t" style="left:456.4px;top:497.0px;font-size:11.7px;line-height:15px;transform:scaleX(0.8930);">Pin &amp; Tail Boards</span>
<span class="t" style="left:456.4px;top:519.1px;font-size:11.7px;line-height:15px;transform:scaleX(0.8703);">Pin Boards Only</span>
<span class="t" style="left:456.4px;top:542.0px;font-size:11.7px;line-height:15px;transform:scaleX(0.8955);">Tail Boards Only</span>
<span class="t" style="left:625.7px;top:497.0px;font-size:11.7px;line-height:15px;transform:scaleX(0.8434);">Left &amp; Right Joints</span>
<span class="t" style="left:625.7px;top:519.1px;font-size:11.7px;line-height:15px;transform:scaleX(0.8403);">Left Joints Only</span>
<span class="t" style="left:625.7px;top:542.0px;font-size:11.7px;line-height:15px;transform:scaleX(0.8546);">Right Joints Only</span>
<span class="t" style="left:167.3px;top:190.2px;font-size:11.7px;line-height:15px;transform:scaleX(0.9008);color:#a0a0a0;">Pins=Tails</span>
<span class="t" style="left:27.7px;top:212.4px;font-size:11.7px;line-height:15px;transform:scaleX(0.8865);color:#a0a0a0;">Full Tails Only</span>
<span class="t" style="left:471.9px;top:112.9px;font-size:10.6px;line-height:13px;transform:scaleX(0.9939);color:#071722;">Drawer Front with Pins</span>
<span class="t" style="left:645.3px;top:245.1px;font-size:10.6px;line-height:13px;transform:scaleX(0.9960);color:#100500;">Drawer Side with Tails</span>
<span class="t" style="left:537.2px;top:132.7px;font-size:13px;line-height:16px;transform:scaleX(0.9571);color:#111;">P</span>
<span class="t" style="left:545.8px;top:134.2px;font-size:11.5px;line-height:14px;transform:scaleX(1.1068);color:#111;">w</span>
<span class="t" style="left:633.6px;top:160.2px;font-size:13.5px;line-height:17px;transform:scaleX(0.9333);color:#111;">T</span>
<span class="t" style="left:641.1px;top:162.4px;font-size:11.5px;line-height:14px;transform:scaleX(0.9865);color:#111;">w</span>
<span class="t" style="left:606.0px;top:192.9px;font-size:13.5px;line-height:17px;transform:scaleX(1.0824);color:#111;">W</span>
<span class="t" style="left:686.6px;top:89.2px;font-size:13.5px;line-height:17px;transform:scaleX(0.9317);color:#111;">S</span>
<span class="t" style="left:716.3px;top:123.8px;font-size:12px;line-height:15px;transform:scaleX(0.8072);color:#111;">D</span>
<span class="t" style="left:759.0px;top:190.0px;font-size:13px;line-height:16px;transform:scaleX(0.9430);color:#111;">T</span>
<span class="t" style="left:626.2px;top:102.7px;font-size:11px;line-height:14px;transform:rotate(-16.5deg) scaleX(0.9972);transform-origin:0 80%;color:#111;">Top</span>
<span class="t" style="right:754.5px;top:79.1px;font-size:11px;line-height:14px;transform:scaleX(0.985);transform-origin:100% 50%;font-weight:bold;">6.5</span>
<span class="t" style="right:754.5px;top:101.6px;font-size:11px;line-height:14px;transform:scaleX(0.985);transform-origin:100% 50%;font-weight:bold;">0.625</span>
<span class="t" style="right:754.5px;top:124.1px;font-size:11px;line-height:14px;transform:scaleX(0.985);transform-origin:100% 50%;font-weight:bold;">.55</span>
<span class="t" style="right:752.7px;top:259.3px;font-size:11px;line-height:14px;transform:scaleX(0.975);transform-origin:100% 50%;color:#6d6d6d;">.015</span>
<span class="t" style="right:752.7px;top:281.8px;font-size:11px;line-height:14px;transform:scaleX(0.975);transform-origin:100% 50%;color:#6d6d6d;">80</span>
<span class="t" style="right:752.7px;top:304.3px;font-size:11px;line-height:14px;transform:scaleX(0.985);transform-origin:100% 50%;font-weight:bold;color:#ff0000;">0.3602</span>
<span class="t" style="right:574.9px;top:124.1px;font-size:11px;line-height:14px;transform:scaleX(0.975);transform-origin:100% 50%;color:#6d6d6d;">.125</span>
<span class="t" style="right:574.7px;top:146.6px;font-size:11px;line-height:14px;transform:scaleX(0.985);transform-origin:100% 50%;font-weight:bold;">9</span>
<span class="t" style="right:574.9px;top:169.1px;font-size:11px;line-height:14px;transform:scaleX(0.975);transform-origin:100% 50%;color:#6d6d6d;">1</span>
<span class="t" style="right:574.9px;top:191.6px;font-size:11px;line-height:14px;transform:scaleX(0.975);transform-origin:100% 50%;color:#6d6d6d;">.5</span>
<span class="t" style="right:574.7px;top:214.1px;font-size:11px;line-height:14px;transform:scaleX(0.985);transform-origin:100% 50%;font-weight:bold;">.03</span>
<span class="t" style="right:574.7px;top:236.6px;font-size:11px;line-height:14px;transform:scaleX(0.985);transform-origin:100% 50%;font-weight:bold;">0.03</span>
<span class="t" style="right:574.9px;top:259.1px;font-size:11px;line-height:14px;transform:scaleX(0.975);transform-origin:100% 50%;color:#6d6d6d;">0.05</span>
<span class="t" style="right:574.7px;top:281.6px;font-size:11px;line-height:14px;transform:scaleX(0.985);transform-origin:100% 50%;font-weight:bold;">-.002</span>
<span class="t" style="right:788.5px;top:521.1px;font-size:11px;line-height:14px;transform:scaleX(0.985);transform-origin:100% 50%;font-weight:bold;">13</span>
<span class="t" style="right:788.5px;top:543.6px;font-size:11px;line-height:14px;transform:scaleX(0.985);transform-origin:100% 50%;font-weight:bold;">.4375</span>
<span class="t" style="right:788.5px;top:566.1px;font-size:11px;line-height:14px;transform:scaleX(0.985);transform-origin:100% 50%;font-weight:bold;">.65</span>
<span class="t" style="right:788.5px;top:588.6px;font-size:11px;line-height:14px;transform:scaleX(0.985);transform-origin:100% 50%;font-weight:bold;">8</span>
<span class="t" style="right:788.5px;top:611.1px;font-size:11px;line-height:14px;transform:scaleX(0.985);transform-origin:100% 50%;font-weight:bold;">75</span>
<span class="t" style="right:788.5px;top:633.6px;font-size:11px;line-height:14px;transform:scaleX(0.985);transform-origin:100% 50%;font-weight:bold;">14000</span>
<span class="t" style="right:576.8px;top:521.1px;font-size:11px;line-height:14px;transform:scaleX(0.975);transform-origin:100% 50%;color:#6d6d6d;">2</span>
<span class="t" style="right:576.8px;top:543.6px;font-size:11px;line-height:14px;transform:scaleX(0.975);transform-origin:100% 50%;color:#6d6d6d;">.1875</span>
<span class="t" style="right:576.8px;top:566.1px;font-size:11px;line-height:14px;transform:scaleX(0.975);transform-origin:100% 50%;color:#6d6d6d;">.5</span>
<span class="t" style="right:576.8px;top:588.6px;font-size:11px;line-height:14px;transform:scaleX(0.975);transform-origin:100% 50%;color:#6d6d6d;">.15</span>
<span class="t" style="right:576.8px;top:611.1px;font-size:11px;line-height:14px;transform:scaleX(0.975);transform-origin:100% 50%;color:#6d6d6d;">75</span>
<span class="t" style="right:576.8px;top:633.6px;font-size:11px;line-height:14px;transform:scaleX(0.975);transform-origin:100% 50%;color:#6d6d6d;">13500</span>
<span class="t" style="left:258.6px;top:309.6px;font-size:12.3px;line-height:15px;transform:scaleX(0.9190);font-weight:bold;">Calculate / Preview</span>
<span class="t" style="left:126.5px;top:491.8px;font-size:12px;line-height:15px;transform:scaleX(0.9695);font-weight:bold;">Select Tool</span>
<span class="t" style="left:342.0px;top:491.5px;font-size:12px;line-height:15px;transform:scaleX(0.9727);font-weight:bold;color:#a3a3a3;">Select Tool</span>
<span class="t" style="left:835.7px;top:509.9px;font-size:12px;line-height:15px;transform:scaleX(0.9795);font-weight:bold;">Load Project</span>
<span class="t" style="left:835.7px;top:554.5px;font-size:12px;line-height:15px;transform:scaleX(0.9882);font-weight:bold;">Save Project</span>
<span class="t" style="left:821.2px;top:599.9px;font-size:12px;line-height:15px;transform:scaleX(0.9895);font-weight:bold;">Write G-Code File</span>
<span class="t" style="left:822.6px;top:640.1px;font-size:10.5px;line-height:13px;transform:scaleX(0.9824);font-weight:bold;">Save</span>
<span class="t" style="left:815.3px;top:651.7px;font-size:10.5px;line-height:13px;transform:scaleX(0.9633);font-weight:bold;">Settings</span>
<span class="t" style="left:897.3px;top:644.7px;font-size:12px;line-height:15px;transform:scaleX(0.8994);font-weight:bold;">Exit</span>
</div>
</body></html>
